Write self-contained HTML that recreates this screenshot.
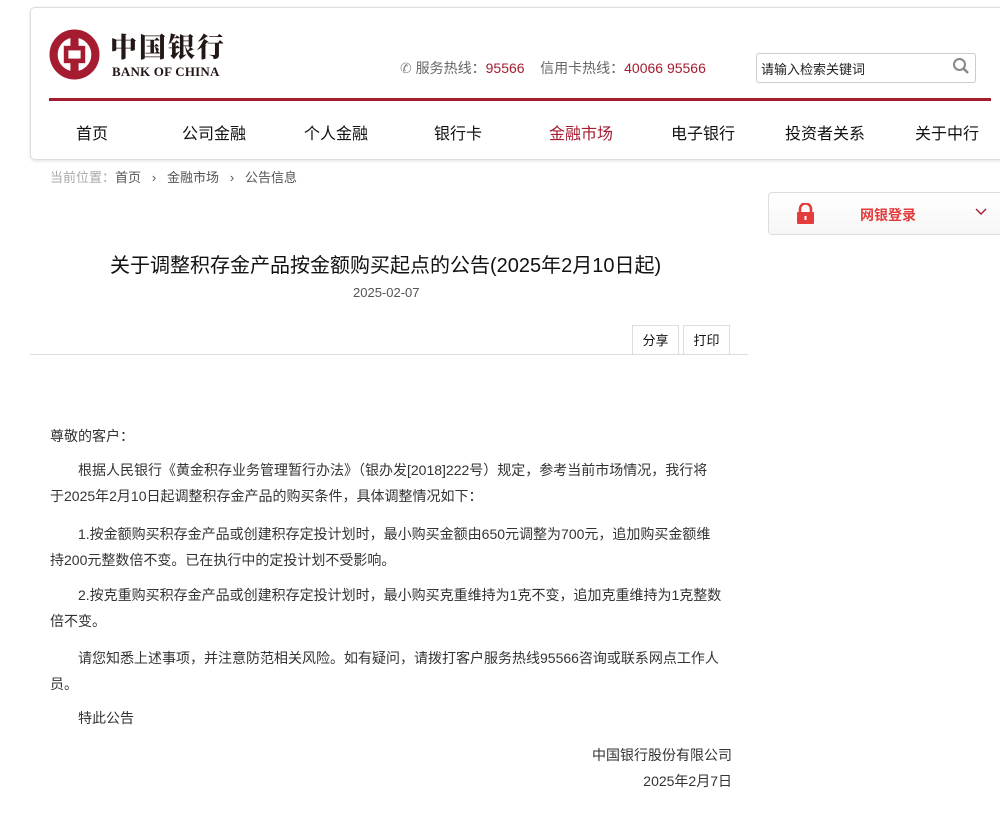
<!DOCTYPE html>
<html><head><meta charset="utf-8"><style>
body{margin:0;width:1000px;height:823px;overflow:hidden;background:#fff;font-family:"Liberation Sans","Noto Sans CJK SC",sans-serif;color:#333;position:relative}
.hdr{position:absolute;left:30px;top:7px;width:990px;height:151px;border:1px solid #ddd;border-radius:5px;box-shadow:0 1px 3px rgba(0,0,0,.12);background:#fff}
.abs{position:absolute;white-space:nowrap}
.nav{position:absolute;top:120px;font-size:16px;color:#111}
.p{position:absolute;left:50px;width:672px;font-size:14px;line-height:26px;color:#333}
</style></head><body>
<div class="hdr"></div>
<svg class="abs" style="left:49px;top:29px" width="51" height="51" viewBox="0 0 50 50"><circle cx="25" cy="25" r="20.5" fill="none" stroke="#a51c30" stroke-width="8"/><rect x="21" y="4" width="8" height="42" fill="#a51c30"/><rect x="14.5" y="16.5" width="21" height="17" fill="#a51c30"/><rect x="19" y="21" width="12" height="8" fill="#fff"/></svg>
<div class="abs" style="left:110px;top:29px;font-family:'Noto Serif CJK SC',serif;font-weight:900;font-size:27px;letter-spacing:2px;color:#231815;line-height:34px">中国银行</div>
<div class="abs" style="left:112px;top:64px;font-family:'Liberation Serif',serif;font-weight:bold;font-size:13px;color:#231815;letter-spacing:.2px">BANK OF CHINA</div>
<div class="abs" style="left:400px;top:58px;font-size:14px;color:#666"><span style="color:#888">&#9990;</span> 服务热线：<span style="color:#a51c30">95566</span>&nbsp;&nbsp;&nbsp;&nbsp;信用卡热线：<span style="color:#a51c30">40066 95566</span></div>
<div class="abs" style="left:756px;top:53px;width:218px;height:28px;border:1px solid #ccc;border-radius:3px"></div>
<div class="abs" style="left:761px;top:59px;font-size:13px;color:#222">请输入检索关键词</div>
<svg class="abs" style="left:952px;top:57px" width="18" height="18" viewBox="0 0 18 18"><circle cx="7.5" cy="7.5" r="5.5" fill="none" stroke="#888" stroke-width="2"/><line x1="11.5" y1="11.5" x2="16" y2="16" stroke="#888" stroke-width="2.4"/></svg>
<div class="abs" style="left:49px;top:98px;width:942px;height:3px;background:#a51c30"></div>
<div class="nav" style="left:76px">首页</div>
<div class="nav" style="left:182px">公司金融</div>
<div class="nav" style="left:304px">个人金融</div>
<div class="nav" style="left:434px">银行卡</div>
<div class="nav" style="left:549px;color:#a51c30">金融市场</div>
<div class="nav" style="left:671px">电子银行</div>
<div class="nav" style="left:785px">投资者关系</div>
<div class="nav" style="left:915px">关于中行</div>
<div class="abs" style="left:50px;top:167px;font-size:13px;color:#555"><span style="color:#aaa">当前位置：</span>首页&nbsp;&nbsp;&nbsp;›&nbsp;&nbsp;&nbsp;金融市场&nbsp;&nbsp;&nbsp;›&nbsp;&nbsp;&nbsp;公告信息</div>
<div class="abs" style="left:768px;top:192px;width:240px;height:41px;border:1px solid #ddd;border-radius:4px;background:linear-gradient(#fff,#f6f6f6)"></div>
<svg class="abs" style="left:796px;top:203px" width="19" height="21" viewBox="0 0 19 21"><path d="M4 9V6a5.5 5.5 0 0 1 11 0v3" fill="none" stroke="#e43c3c" stroke-width="2.6"/><rect x="1" y="9" width="17" height="12" rx="1" fill="#e43c3c"/><rect x="8.5" y="13" width="2" height="4" fill="#fff"/></svg>
<div class="abs" style="left:860px;top:205px;font-size:14px;font-weight:bold;color:#e43c3c">网银登录</div>
<svg class="abs" style="left:975px;top:208px" width="12" height="8" viewBox="0 0 12 8"><path d="M1 1l5 5 5-5" fill="none" stroke="#a51c30" stroke-width="1.4"/></svg>
<div class="abs" style="left:110px;top:249px;font-size:20px;color:#111">关于调整积存金产品按金额购买起点的公告(2025年2月10日起)</div>
<div class="abs" style="left:353px;top:285px;font-size:13px;color:#555">2025-02-07</div>
<div class="abs" style="left:632px;top:325px;width:45px;height:29px;border:1px solid #ddd;border-bottom:none;font-size:13px;color:#111;text-align:center;line-height:29px">分享</div>
<div class="abs" style="left:683px;top:325px;width:45px;height:29px;border:1px solid #ddd;border-bottom:none;font-size:13px;color:#111;text-align:center;line-height:29px">打印</div>
<div class="abs" style="left:30px;top:354px;width:718px;height:1px;background:#ddd"></div>
<div class="p" style="top:423px">尊敬的客户：</div>
<div class="p" style="top:457px;text-indent:28px">根据人民银行《黄金积存业务管理暂行办法》（银办发[2018]222号）规定，参考当前市场情况，我行将<br>于2025年2月10日起调整积存金产品的购买条件，具体调整情况如下：</div>
<div class="p" style="top:521px;text-indent:28px">1.按金额购买积存金产品或创建积存定投计划时，最小购买金额由650元调整为700元，追加购买金额维持200元整数倍不变。已在执行中的定投计划不受影响。</div>
<div class="p" style="top:582px;text-indent:28px">2.按克重购买积存金产品或创建积存定投计划时，最小购买克重维持为1克不变，追加克重维持为1克整数倍不变。</div>
<div class="p" style="top:645px;text-indent:28px">请您知悉上述事项，并注意防范相关风险。如有疑问，请拨打客户服务热线95566咨询或联系网点工作人员。</div>
<div class="p" style="top:705px;text-indent:28px">特此公告</div>
<div class="p" style="top:742px;text-align:right;width:682px">中国银行股份有限公司</div>
<div class="p" style="top:768px;text-align:right;width:682px">2025年2月7日</div>
</body></html>
